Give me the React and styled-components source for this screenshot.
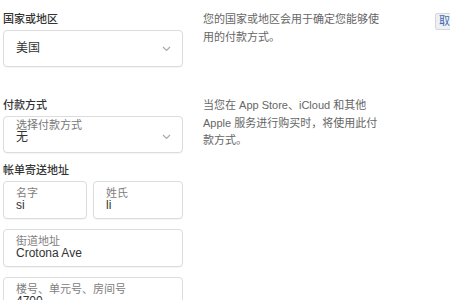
import React from "react";
import styled, { createGlobalStyle } from "styled-components";

const GlobalStyle = createGlobalStyle`
  body {
    margin: 0;
    background: #ffffff;
    overflow: hidden;
    font-family: "Liberation Sans", "Noto Sans CJK SC", sans-serif;
  }
`;

const Chevron = () => (
  <svg width="9" height="6" viewBox="0 0 9 6">
    <polyline points="1,1 4.5,4.5 8,1" fill="none" stroke="#a8a8a8" strokeWidth="1.1" />
  </svg>
);

const App = () => {
  return (
    <Page>
      <GlobalStyle />

      {/* Country */}
      <Section>
        <FormCol>
          <Label>国家或地区</Label>
          <Select>
            <Value>美国</Value>
            <Chevron />
          </Select>
        </FormCol>
        <Note>您的国家或地区会用于确定您能够使用的付款方式。</Note>
        <CancelButton>取消</CancelButton>
      </Section>

      {/* Payment */}
      <Section $top={29}>
        <FormCol>
          <Label>付款方式</Label>
          <Select $stacked>
            <Stack>
              <Hint>选择付款方式</Hint>
              <Value>无</Value>
            </Stack>
            <Chevron />
          </Select>
        </FormCol>
        <Note>当您在 App Store、iCloud 和其他 Apple 服务进行购买时，将使用此付款方式。</Note>
      </Section>

      {/* Billing address */}
      <Section $top={8}>
        <FormCol>
          <Label>帐单寄送地址</Label>
          <FieldRow>
            <Field>
              <FieldLabel>名字</FieldLabel>
              <FieldValue>si</FieldValue>
            </Field>
            <Field>
              <FieldLabel>姓氏</FieldLabel>
              <FieldValue>li</FieldValue>
            </Field>
          </FieldRow>
          <Field>
            <FieldLabel>街道地址</FieldLabel>
            <FieldValue>Crotona Ave</FieldValue>
          </Field>
          <Field>
            <FieldLabel>楼号、单元号、房间号</FieldLabel>
            <FieldValue>4700</FieldValue>
          </Field>
        </FormCol>
      </Section>
    </Page>
  );
};

export default App;

// Styled Components

const Page = styled.div`
  width: 480px;
  padding: 10px 0 0 3px;
`;

const Section = styled.div`
  display: grid;
  grid-template-columns: 180px 211px auto;
  column-gap: 20px;
  align-items: start;
  margin-top: ${(p) => p.$top || 0}px;
`;

const FormCol = styled.div`
  display: flex;
  flex-direction: column;
  gap: 10px;

  & > :first-child {
    margin-bottom: -8px;
  }
`;

const Label = styled.div`
  font-size: 11px;
  line-height: 18px;
  font-weight: 500;
  color: #333;
`;

const Select = styled.div`
  box-sizing: border-box;
  height: 37px;
  display: flex;
  align-items: ${(p) => (p.$stacked ? "flex-start" : "center")};
  justify-content: space-between;
  padding: ${(p) => (p.$stacked ? "2px 11px 0 12px" : "0 11px 0 12px")};
  border: 1px solid #dcdcdc;
  border-radius: 4px;
  background: #fff;
  box-shadow: 0 1px 1px rgba(0, 0, 0, 0.04);

  svg {
    align-self: center;
    margin-top: ${(p) => (p.$stacked ? "2px" : "0")};
  }
`;

const Stack = styled.div`
  display: flex;
  flex-direction: column;
`;

const Hint = styled.div`
  font-size: 11px;
  line-height: 12px;
  color: #777;
`;

const Value = styled.div`
  font-size: 12px;
  line-height: 13px;
  color: #333;
`;

const Note = styled.div`
  max-width: 182px;
  font-size: 11px;
  line-height: 17.5px;
  color: #666;
  margin-top: 1px;
`;

const CancelButton = styled.div`
  padding: 1px 3px;
  margin-top: 3px;
  margin-left: 1px;
  font-size: 11px;
  line-height: 13px;
  color: #3d6bb3;
  background: #eef0f4;
  border: 1px solid #d4d8de;
  border-radius: 2px;
  white-space: nowrap;
`;

const FieldRow = styled.div`
  display: grid;
  grid-template-columns: 84px 90px;
  column-gap: 6px;
`;

const Field = styled.div`
  box-sizing: border-box;
  height: 38px;
  padding: 5px 11px 0 12px;
  border: 1px solid #dcdcdc;
  border-radius: 4px;
  background: #fff;
  box-shadow: 0 1px 1px rgba(0, 0, 0, 0.04);
`;

const FieldLabel = styled.div`
  font-size: 11px;
  line-height: 12px;
  color: #808080;
`;

const FieldValue = styled.div`
  font-size: 12px;
  line-height: 13px;
  color: #333;
`;
